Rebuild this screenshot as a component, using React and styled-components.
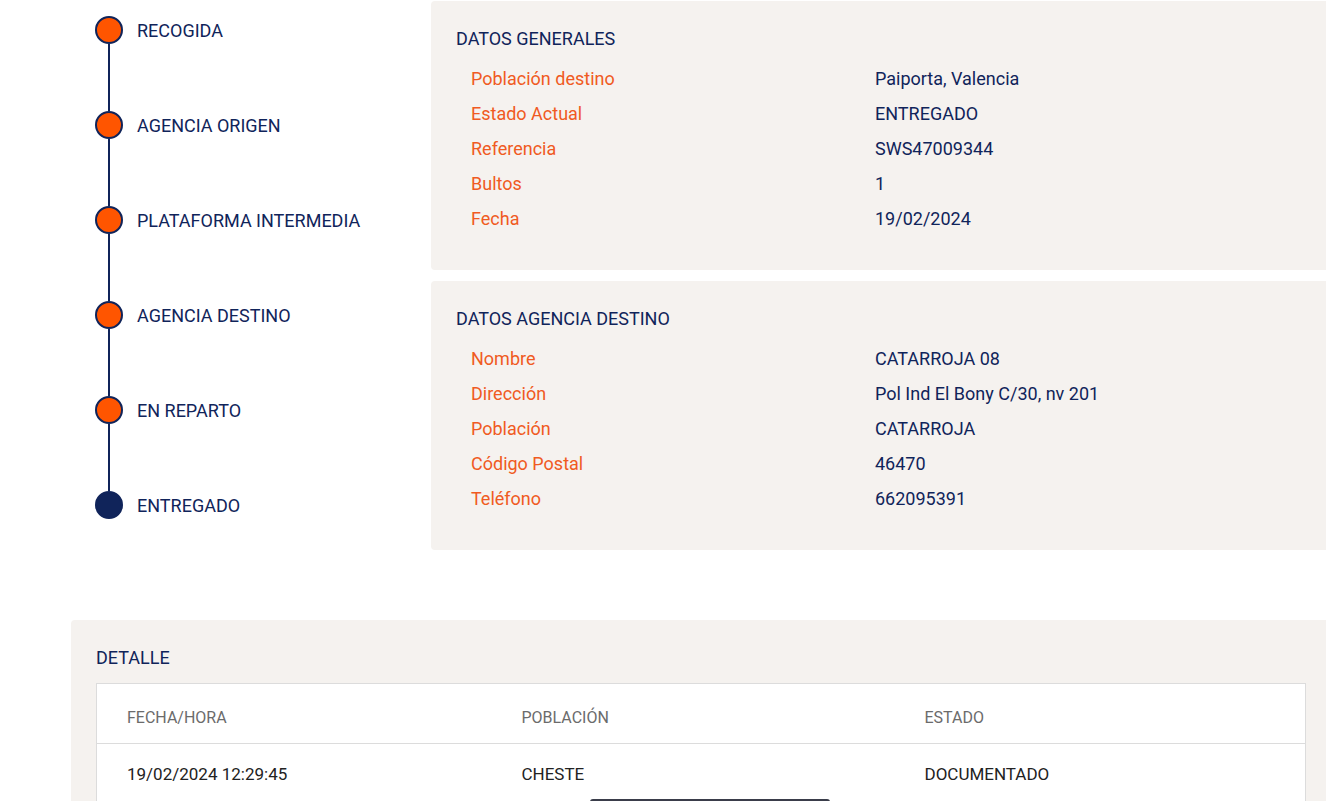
import React from 'react';
import styled, { createGlobalStyle } from 'styled-components';

const GlobalStyle = createGlobalStyle`
  html, body {
    margin: 0;
    padding: 0;
    background: #fff;
    overflow: hidden;
  }
  body {
    font-family: Roboto, "Noto Sans", sans-serif;
  }
`;

const steps = [
  { name: 'RECOGIDA', done: false },
  { name: 'AGENCIA ORIGEN', done: false },
  { name: 'PLATAFORMA INTERMEDIA', done: false },
  { name: 'AGENCIA DESTINO', done: false },
  { name: 'EN REPARTO', done: false },
  { name: 'ENTREGADO', done: true },
];

const generales = [
  ['Población destino', 'Paiporta, Valencia'],
  ['Estado Actual', 'ENTREGADO'],
  ['Referencia', 'SWS47009344'],
  ['Bultos', '1'],
  ['Fecha', '19/02/2024'],
];

const agencia = [
  ['Nombre', 'CATARROJA 08'],
  ['Dirección', 'Pol Ind El Bony C/30, nv 201'],
  ['Población', 'CATARROJA'],
  ['Código Postal', '46470'],
  ['Teléfono', '662095391'],
];

const detalle = [
  ['19/02/2024 12:29:45', 'CHESTE', 'DOCUMENTADO'],
];

const App = () => {
  return (
    <>
      <GlobalStyle />
      <Page>
        <TopRow>
          <Timeline>
            {steps.map((step, i) => (
              <Step key={step.name}>
                <Rail>
                  <Dot $final={step.done} />
                  {i < steps.length - 1 && <Connector />}
                </Rail>
                <StepLabel>{step.name}</StepLabel>
              </Step>
            ))}
          </Timeline>
          <InfoColumn>
            <Panel>
              <PanelTitle>DATOS GENERALES</PanelTitle>
              {generales.map(([k, v]) => (
                <InfoRow key={k}>
                  <InfoKey>{k}</InfoKey>
                  <InfoValue>{v}</InfoValue>
                </InfoRow>
              ))}
            </Panel>
            <Panel>
              <PanelTitle>DATOS AGENCIA DESTINO</PanelTitle>
              {agencia.map(([k, v]) => (
                <InfoRow key={k}>
                  <InfoKey>{k}</InfoKey>
                  <InfoValue>{v}</InfoValue>
                </InfoRow>
              ))}
            </Panel>
          </InfoColumn>
        </TopRow>

        <DetailPanel>
          <PanelTitle>DETALLE</PanelTitle>
          <Table>
            <colgroup>
              <col style={{ width: 395 }} />
              <col style={{ width: 403 }} />
              <col />
            </colgroup>
            <thead>
              <tr>
                <Th>FECHA/HORA</Th>
                <Th>POBLACIÓN</Th>
                <Th>ESTADO</Th>
              </tr>
            </thead>
            <tbody>
              {detalle.map((row) => (
                <tr key={row[0]}>
                  {row.map((cell) => (
                    <Td key={cell}>{cell}</Td>
                  ))}
                </tr>
              ))}
            </tbody>
          </Table>
        </DetailPanel>
      </Page>
      <FloatingTab />
    </>
  );
};

export default App;

const Page = styled.div`
  width: 1260px;
  padding-left: 71px;
`;

const TopRow = styled.div`
  display: flex;
  align-items: flex-start;
`;

const Timeline = styled.div`
  width: 336px;
  padding-left: 24px;
  padding-top: 16px;
  flex-shrink: 0;
`;

const Step = styled.div`
  display: flex;
  align-items: flex-start;
`;

const Rail = styled.div`
  display: flex;
  flex-direction: column;
  align-items: center;
  width: 28px;
`;

const Dot = styled.div`
  width: 24px;
  height: 24px;
  border-radius: 50%;
  border: 2px solid #10245a;
  background: ${(p) => (p.$final ? '#10245a' : '#ff5500')};
`;

const Connector = styled.div`
  width: 2px;
  height: 67px;
  background: #10245a;
`;

const StepLabel = styled.div`
  margin-left: 14px;
  line-height: 30px;
  font-size: 18px;
  color: #10245a;
`;

const InfoColumn = styled.div`
  display: flex;
  flex-direction: column;
  gap: 11px;
  margin-top: 1px;
  width: 900px;
  flex-shrink: 0;
`;

const Panel = styled.div`
  background: #f5f2ef;
  border-radius: 4px;
  height: 269px;
  box-sizing: border-box;
  padding: 27px 25px 0;
`;

const PanelTitle = styled.div`
  font-size: 18px;
  line-height: 22px;
  color: #10245a;
  margin-bottom: 11px;
`;

const InfoRow = styled.div`
  display: flex;
  padding-left: 15px;
  line-height: 35px;
  font-size: 18px;
`;

const InfoKey = styled.div`
  width: 404px;
  color: #f05a22;
`;

const InfoValue = styled.div`
  color: #10245a;
`;

const DetailPanel = styled.div`
  margin-top: 70px;
  background: #f5f2ef;
  border-radius: 4px;
  padding: 27px 25px 25px;
  height: 300px;
`;

const Table = styled.table`
  width: 1210px;
  table-layout: fixed;
  border-collapse: collapse;
  background: #fff;
  border: 1px solid #dcdcdc;
  margin-top: 14px;
`;

const Th = styled.th`
  padding: 25px 0 16px 30px;
  line-height: 18px;
  text-align: left;
  font-weight: 400;
  font-size: 16px;
  color: #6b6b6b;
  border-bottom: 1px solid #dcdcdc;
`;

const Td = styled.td`
  height: 60px;
  padding: 0 0 0 30px;
  font-size: 17px;
  color: #222;
`;

const FloatingTab = styled.div`
  position: fixed;
  left: 590px;
  top: 799px;
  width: 240px;
  height: 30px;
  background: #fff;
  border-top: 2px solid #3a3d4a;
  border-radius: 3px 3px 0 0;
`;
